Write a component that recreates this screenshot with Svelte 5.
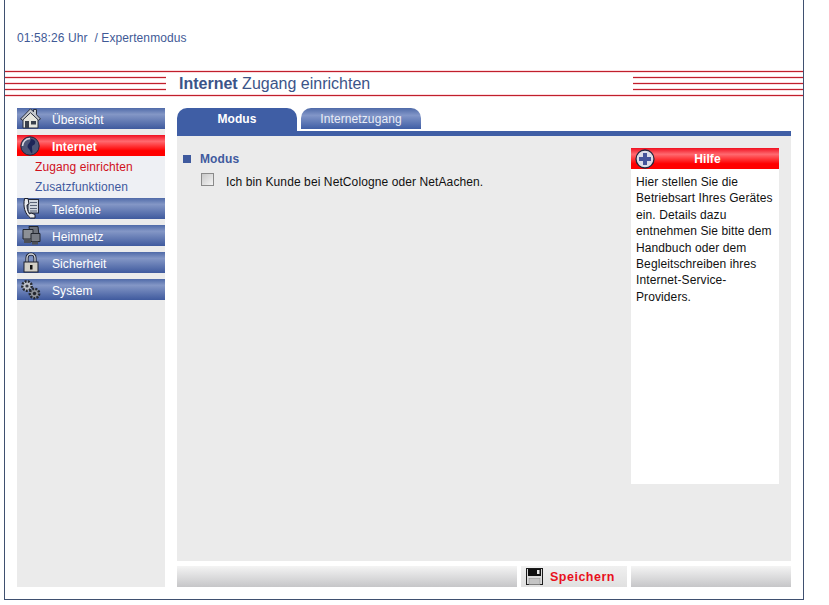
<script>
	const nav = [
		{ label: 'Übersicht', icon: 'house' },
		{ label: 'Internet', icon: 'globe', active: true, sub: ['Zugang einrichten', 'Zusatzfunktionen'] },
		{ label: 'Telefonie', icon: 'phone' },
		{ label: 'Heimnetz', icon: 'net' },
		{ label: 'Sicherheit', icon: 'lock' },
		{ label: 'System', icon: 'gears' }
	];
</script>

{#snippet stripes()}
	<div class="stripes"></div>
{/snippet}

<div class="frame">
	<header class="top">01:58:26 Uhr &nbsp;/ Expertenmodus</header>

	<div class="band">
		{@render stripes()}
		<h1><b>Internet</b> Zugang einrichten</h1>
		{@render stripes()}
	</div>

	<div class="page">
		<nav class="side">
			{#each nav as item}
				<div class="btn" class:active={item.active}>
					<svg class="ico" viewBox="0 0 21 21" width="21" height="21">
						{#if item.icon === 'house'}
							<path d="M3 10v10h15V10L10.500 3z" fill="#e6e6de" stroke="#2a3040"/>
							<path d="M.5 11 10.500.8l3 3V1.500h3v5.200l4 4.300-2 1.200-8-7.500-8 7.500z" fill="#c4c8cc" stroke="#2a3040"/>
							<rect x="5" y="13" width="4" height="7" fill="#39404c"/>
							<rect x="11" y="13" width="5" height="3.500" fill="#39404c"/>
						{:else if item.icon === 'globe'}
							<circle cx="10" cy="11" r="9.200" fill="#4d5678" stroke="#20243a"/>
							<path d="M2.500 11a7.500 7.500 0 0 1 7.500-7.500" fill="none" stroke="#d8dae2" stroke-width="1.500"/>
							<path d="M11 4c3 .5 5 2 4 4.500s-3 1-3 4 1 3 0 6c-2-1.500-2-4-3.500-5s-1-3.500 0-4.500 2-3 2.500-5z" fill="#1d2558"/>
						{:else if item.icon === 'phone'}
							<rect x="8" y="1.500" width="10.500" height="13.500" fill="#cfd6de" stroke="#22283a"/>
							<path d="M10 4.500h7M10 7.500h7M10 10.500h7M10 13h7" stroke="#5a6478"/>
							<path d="M8 .5H4.500c-1.500 8 0 15 6 19.500H15v-3.500l-4-1.500-1.500 1C7.500 13 7 10 7 7l2-1z" fill="#e8eaee" stroke="#1a1e2a"/>
						{:else if item.icon === 'net'}
							<path d="M9 1.500h9l1 9h-9z" fill="#6e727a" stroke="#22262e"/>
							<path d="M3 4.500h10v9.500H3z" fill="#8c9096" stroke="#22262e"/>
							<path d="M11 8.500h9v8h-9z" fill="#777b83" stroke="#22262e"/>
							<path d="M4 14h7v4H4zM12 16.500h6v3h-6z" fill="#4c4f56"/>
						{:else if item.icon === 'lock'}
							<path d="M7 10V6a4 4 0 0 1 8 0v4" fill="none" stroke="#1e2230" stroke-width="3.200"/>
							<path d="M7 10V6a4 4 0 0 1 8 0v4" fill="none" stroke="#d8dce2" stroke-width="1.300"/>
							<rect x="4" y="10" width="14" height="10" fill="#d2cfc6" stroke="#1e2230"/>
							<rect x="10" y="13" width="2.500" height="4.500" fill="#111"/>
						{:else if item.icon === 'gears'}
							<circle cx="7" cy="7" r="4.700" fill="#c0c4ca" stroke="#262a32" stroke-width="2.400" stroke-dasharray="2 1.200"/>
							<circle cx="7" cy="7" r="1.600" fill="#3a3e46"/>
							<circle cx="14.500" cy="14.500" r="4.700" fill="#8c9096" stroke="#262a32" stroke-width="2.400" stroke-dasharray="2 1.200"/>
							<circle cx="14.500" cy="14.500" r="1.700" fill="#22252c"/>
						{/if}
					</svg>
					<span>{item.label}</span>
				</div>
				{#if item.sub}
					<ul class="sub">
						{#each item.sub as s, i}
							<li class:current={i === 0}>{s}</li>
						{/each}
					</ul>
				{/if}
			{/each}
		</nav>

		<main class="main">
			<div class="tabs">
				<div class="tab on">Modus</div>
				<div class="tab">Internetzugang</div>
			</div>
			<div class="panel">
				<section class="form">
					<h2>Modus</h2>
					<label class="check"><i class="box"></i><span>Ich bin Kunde bei NetCologne oder NetAachen.</span></label>
				</section>
				<aside class="help">
					<div class="help-head">
						<svg class="plus" viewBox="0 0 20 20" width="20" height="20">
							<circle cx="10" cy="10" r="9" fill="#dcdde8" stroke="#23263c" stroke-width="1.300"/>
							<path d="M10 4v12M4 10h12" stroke="#45549a" stroke-width="4"/>
						</svg>
						<span>Hilfe</span>
					</div>
					<p>Hier stellen Sie die Betriebsart Ihres Gerätes ein. Details dazu entnehmen Sie bitte dem Handbuch oder dem Begleitschreiben ihres Internet-Service-Providers.</p>
				</aside>
			</div>
			<footer class="bar">
				<div class="fill wide"></div>
				<div class="save">
					<svg viewBox="0 0 17 17" width="17" height="17">
						<rect x=".5" y=".5" width="16" height="16" fill="#dcdcdc" stroke="#1c1c1c"/>
						<rect x="2" y="1" width="13" height="7" fill="#111"/>
						<rect x="11" y="2" width="2.500" height="4" fill="#e8e8e8"/>
						<rect x="3" y="10.500" width="11" height="6" fill="#c4c4c4" stroke="#8a8a8a" stroke-width=".5"/>
					</svg>
					<span>Speichern</span>
				</div>
				<div class="fill narrow"></div>
			</footer>
		</main>
	</div>
</div>

<style>
	:global(body) {
		margin: 0;
		background: #fff;
		font-family: "Liberation Sans", Arial, sans-serif;
		font-size: 12px;
		letter-spacing: 0.1px;
	}
	.frame {
		box-sizing: border-box;
		width: 800px;
		height: 600px;
		margin-left: 4px;
		border: 1px solid #3f5070;
		border-width: 0 1px 1px;
	}
	.top {
		height: 71px;
		box-sizing: border-box;
		padding: 31px 0 0 12px;
		color: #3f5a96;
		line-height: 14px;
	}
	.band {
		display: flex;
		box-sizing: border-box;
		height: 25px;
		border-top: 1px solid #c01f2c;
		border-bottom: 1px solid #c01f2c;
		box-shadow: 0 1px #fbdcdf, 0 -1px #fbdcdf, inset 0 1px #fbdcdf, inset 0 -1px #fbdcdf;
	}
	.stripes {
		flex: none;
		box-sizing: border-box;
		width: 161px;
		height: 13px;
		margin-top: 5px;
		border-top: 1px solid #c01f2c;
		border-bottom: 1px solid #c01f2c;
		box-shadow: 0 1px #fbdcdf, 0 -1px #fbdcdf, inset 0 1px #fbdcdf, inset 0 -1px #fbdcdf;
		background: linear-gradient(#fbdcdf 0 1px, #c01f2c 1px 2px, #fbdcdf 2px 3px) 0 4px / 100% 3px no-repeat;
	}
	.stripes:last-child {
		width: 170px;
	}
	h1 {
		flex: 1;
		margin: 0;
		padding-left: 13px;
		color: #3b5488;
		font-size: 16px;
		font-weight: 400;
		letter-spacing: 0;
		line-height: 23px;
	}
	.page {
		display: flex;
		gap: 12px;
		padding: 12px 12px 0;
	}
	.side {
		flex: none;
		display: flex;
		flex-direction: column;
		gap: 6px;
		width: 148px;
		height: 479px;
		background: #ebebeb;
	}
	.btn {
		position: relative;
		height: 21px;
		padding-left: 35px;
		color: #fff;
		line-height: 24px;
		background: linear-gradient(#4f6aa8, #8497c6 30%, #3f5a9e);
	}
	.btn.active {
		font-weight: 700;
		background: linear-gradient(#f01020, #ff6a70 30%, #ff0000 75%);
	}
	.ico {
		position: absolute;
		left: 3px;
		top: 0;
	}
	.sub {
		margin: -6px 0;
		padding: 0 0 0 18px;
		list-style: none;
		color: #3f5a9e;
		background: #eef0f4;
	}
	.sub li {
		height: 21px;
		line-height: 21px;
	}
	.sub li.current {
		color: #d0101c;
		line-height: 22px;
	}
	.main {
		flex: none;
		width: 614px;
	}
	.tabs {
		display: flex;
		align-items: flex-start;
		gap: 4px;
		height: 23px;
		border-bottom: 5px solid #3f5ea5;
	}
	.tab {
		width: 120px;
		height: 21px;
		border-radius: 10px 10px 0 0;
		text-align: center;
		line-height: 22px;
		color: #e8ecf6;
		background: linear-gradient(#4f6aa8, #8296c8 35%, #3f5ea5);
	}
	.tab.on {
		height: 23px;
		color: #fff;
		font-weight: 700;
		background: #3f5ea5;
	}
	.panel {
		display: flex;
		justify-content: space-between;
		height: 425px;
		padding: 12px 12px 0 0;
		box-sizing: border-box;
		background: #ebebeb;
	}
	h2 {
		position: relative;
		margin: 4px 0 0;
		padding-left: 23px;
		color: #3f5a9e;
		font-size: 12px;
		line-height: 14px;
	}
	h2::before {
		content: '';
		position: absolute;
		left: 6px;
		top: 3px;
		width: 8px;
		height: 8px;
		background: #3f5a9e;
	}
	.check {
		display: flex;
		margin: 7px 0 0 24px;
		color: #111;
		line-height: 14px;
	}
	.check span {
		margin-top: 2px;
	}
	.box {
		box-sizing: border-box;
		width: 13px;
		height: 13px;
		margin-right: 12px;
		border: 1px solid #8a8a8a;
		background: linear-gradient(135deg, #c8c8c8, #f4f4f4);
	}
	.help {
		display: flex;
		flex-direction: column;
		width: 148px;
		height: 336px;
		background: #fff;
	}
	.help-head {
		position: relative;
		height: 21px;
		color: #fff;
		font-weight: 700;
		text-align: center;
		line-height: 22px;
		background: linear-gradient(#f01020, #ff6a70 30%, #ff0000 75%);
	}
	.help-head span {
		padding-left: 5px;
	}
	.plus {
		position: absolute;
		left: 4px;
		top: 1px;
	}
	.help p {
		margin: 0;
		padding: 5px 4px 0 5px;
		color: #111;
		line-height: 16.400px;
	}
	.bar {
		display: flex;
		gap: 4px;
		height: 21px;
		margin-top: 5px;
	}
	.fill {
		background: linear-gradient(#f4f4f4, #c6c6c8);
	}
	.wide {
		width: 340px;
	}
	.narrow {
		width: 160px;
	}
	.save {
		display: flex;
		align-items: center;
		width: 106px;
		box-sizing: border-box;
		padding-left: 5px;
		gap: 7px;
		color: #e8101c;
		font-weight: 700;
		font-size: 12.500px;
		letter-spacing: 0.5px;
		background: linear-gradient(#f0f0f0, #e0e0e0);
	}
</style>
